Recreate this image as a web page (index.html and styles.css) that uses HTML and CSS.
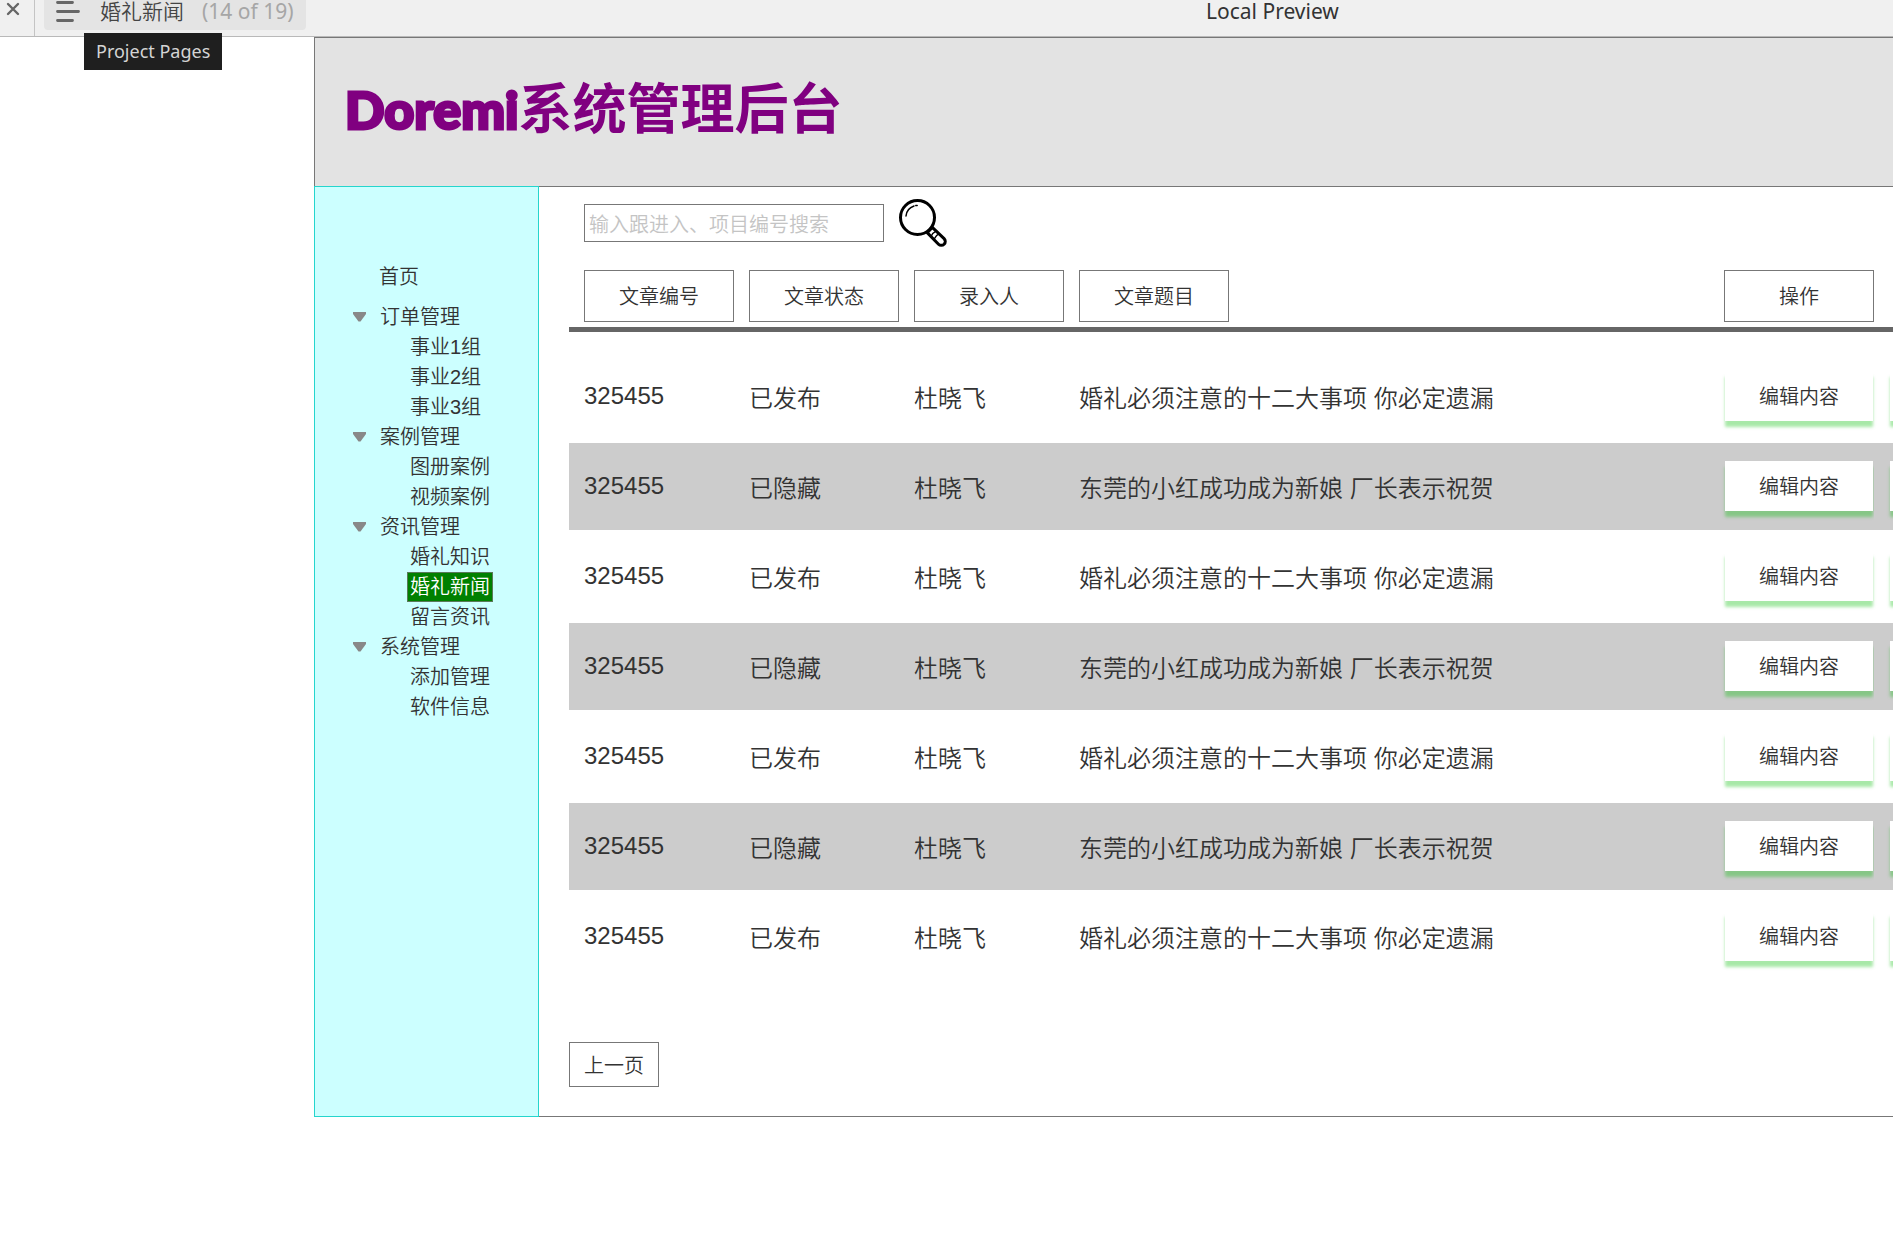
FILE: index.html
```html
<!DOCTYPE html>
<html lang="zh-CN">
<head>
<meta charset="utf-8">
<title>婚礼新闻</title>
<link rel="stylesheet" href="styles.css">
</head>
<body>
<div class="topbar">
  <button class="close" type="button" aria-label="Close">
    <svg width="14" height="14" viewBox="0 0 14 14"><path d="M2 2l10 10M12 2L2 12" stroke="#666" stroke-width="2.4" stroke-linecap="round"/></svg>
  </button>
  <div class="pages-wrap">
    <button class="pages" type="button" aria-describedby="pages-tip">
      <svg width="24" height="24" viewBox="0 0 24 24"><path d="M1.500 3.500h15M1.500 12.500h21M1.500 21.500h15" stroke="#666" stroke-width="2.800" stroke-linecap="round"/></svg>
      <span class="page-name">婚礼新闻</span>
      <span class="page-count">(14 of 19)</span>
    </button>
    <div class="tooltip" id="pages-tip" role="tooltip">Project Pages</div>
  </div>
  <div class="preview-title">Local Preview</div>
</div>

<div class="canvas">
  <header class="banner">
    <h1><span class="brand">Doremi</span>系统管理后台</h1>
  </header>
  <div class="body">
    <nav class="sidebar">
      <a class="home" href="#">首页</a>
      <ul class="tree">
        <li>
          <button class="group" type="button" aria-expanded="true"><svg width="13" height="10" viewBox="0 0 13 10"><path d="M0 0h13v2L7.500 9.500h-2L0 2z" fill="#888"/></svg>订单管理</button>
          <ul>
            <li><a href="#">事业1组</a></li>
            <li><a href="#">事业2组</a></li>
            <li><a href="#">事业3组</a></li>
          </ul>
        </li>
        <li>
          <button class="group" type="button" aria-expanded="true"><svg width="13" height="10" viewBox="0 0 13 10"><path d="M0 0h13v2L7.500 9.500h-2L0 2z" fill="#888"/></svg>案例管理</button>
          <ul>
            <li><a href="#">图册案例</a></li>
            <li><a href="#">视频案例</a></li>
          </ul>
        </li>
        <li>
          <button class="group" type="button" aria-expanded="true"><svg width="13" height="10" viewBox="0 0 13 10"><path d="M0 0h13v2L7.500 9.500h-2L0 2z" fill="#888"/></svg>资讯管理</button>
          <ul>
            <li><a href="#">婚礼知识</a></li>
            <li><a class="active" href="#" aria-current="page">婚礼新闻</a></li>
            <li><a href="#">留言资讯</a></li>
          </ul>
        </li>
        <li>
          <button class="group" type="button" aria-expanded="true"><svg width="13" height="10" viewBox="0 0 13 10"><path d="M0 0h13v2L7.500 9.500h-2L0 2z" fill="#888"/></svg>系统管理</button>
          <ul>
            <li><a href="#">添加管理</a></li>
            <li><a href="#">软件信息</a></li>
          </ul>
        </li>
      </ul>
    </nav>
    <main class="content">
      <form class="search">
        <input type="text" aria-label="搜索" placeholder="输入跟进入、项目编号搜索">
        <button type="button" aria-label="搜索">
          <svg width="48" height="48" viewBox="0 0 48 48" fill="none" stroke="#000">
            <circle cx="18.500" cy="18.500" r="17" stroke-width="3"/>
            <path d="M7 17c.5-5 3.500-8.500 8-10M16.800 6.600l1.400-.2" stroke-width="1.500" stroke-linecap="round"/>
            <path d="M28.200 33.600l11.300 11.600a3.700 3.700 0 0 0 5.600-5.600L33.300 28.400z" stroke-width="3" stroke-linejoin="round"/>
            <path d="M32 37.500c1.500-3 3-4.500 5.500-5.600M35 40.200c1.200-2.700 2.700-4.400 5.200-5.600" stroke-width="1.500"/>
          </svg>
        </button>
      </form>
      <table class="articles">
        <colgroup><col class="c-short"><col class="c-short"><col class="c-short"><col><col class="c-short"><col class="c-more"></colgroup>
        <thead>
          <tr>
            <th scope="col"><span>文章编号</span></th>
            <th scope="col"><span>文章状态</span></th>
            <th scope="col"><span>录入人</span></th>
            <th scope="col"><span>文章题目</span></th>
            <th scope="col"><span>操作</span></th>
            <td></td>
          </tr>
        </thead>
        <tbody>
          <tr><td>325455</td><td class="zh">已发布</td><td class="zh">杜晓飞</td><td class="zh">婚礼必须注意的十二大事项 你必定遗漏</td><td><button type="button">编辑内容</button></td><td><button type="button" aria-label="更多操作"></button></td></tr>
          <tr><td>325455</td><td class="zh">已隐藏</td><td class="zh">杜晓飞</td><td class="zh">东莞的小红成功成为新娘 厂长表示祝贺</td><td><button type="button">编辑内容</button></td><td><button type="button" aria-label="更多操作"></button></td></tr>
          <tr><td>325455</td><td class="zh">已发布</td><td class="zh">杜晓飞</td><td class="zh">婚礼必须注意的十二大事项 你必定遗漏</td><td><button type="button">编辑内容</button></td><td><button type="button" aria-label="更多操作"></button></td></tr>
          <tr><td>325455</td><td class="zh">已隐藏</td><td class="zh">杜晓飞</td><td class="zh">东莞的小红成功成为新娘 厂长表示祝贺</td><td><button type="button">编辑内容</button></td><td><button type="button" aria-label="更多操作"></button></td></tr>
          <tr><td>325455</td><td class="zh">已发布</td><td class="zh">杜晓飞</td><td class="zh">婚礼必须注意的十二大事项 你必定遗漏</td><td><button type="button">编辑内容</button></td><td><button type="button" aria-label="更多操作"></button></td></tr>
          <tr><td>325455</td><td class="zh">已隐藏</td><td class="zh">杜晓飞</td><td class="zh">东莞的小红成功成为新娘 厂长表示祝贺</td><td><button type="button">编辑内容</button></td><td><button type="button" aria-label="更多操作"></button></td></tr>
          <tr><td>325455</td><td class="zh">已发布</td><td class="zh">杜晓飞</td><td class="zh">婚礼必须注意的十二大事项 你必定遗漏</td><td><button type="button">编辑内容</button></td><td><button type="button" aria-label="更多操作"></button></td></tr>
        </tbody>
      </table>
      <button class="prev" type="button">上一页</button>
    </main>
  </div>
</div>
</body>
</html>
```
FILE: styles.css
```css
* {
  box-sizing: border-box;
}

body {
  margin: 0;
  background: #fff;
  color: #333;
  font: 350 20px/30px "Liberation Sans", "Noto Sans CJK SC", sans-serif;
}

button {
  margin: 0;
  padding: 0;
  border: 0;
  background: none;
  color: inherit;
  font: inherit;
}

svg {
  display: block;
  flex: none;
}

a {
  color: inherit;
  text-decoration: none;
}

ul {
  margin: 0;
  padding: 0;
  list-style: none;
}

/* preview toolbar */
.topbar {
  position: relative;
  display: flex;
  height: 37px;
  background: #f0f0f0;
  border-bottom: 1px solid #b9b9b9;
  font-family: "Noto Sans", "Noto Sans CJK SC", sans-serif;
  font-weight: 400;
}

.close {
  width: 35px;
  padding: 2px 0 20px 6px;
  border-right: 1px solid #c4c4c4;
}

.pages-wrap {
  position: relative;
  margin-left: 9px;
}

.pages {
  display: flex;
  align-items: center;
  width: 262px;
  height: 30px;
  padding: 0 0 8px 12px;
  border-radius: 0 0 4px 4px;
  background: #e4e4e4;
  font-size: 21px;
  line-height: 22px;
}

.pages svg {
  margin-right: 20px;
}

.page-name {
  margin-right: 18px;
  color: #444;
  font-weight: 350;
}

.page-count {
  color: #a6a6a6;
}

.tooltip {
  position: absolute;
  left: 40px;
  top: 33px;
  z-index: 1;
  padding: 0 12px;
  background: #1f1f1f;
  color: #d4d4d4;
  font-size: 18px;
  line-height: 37px;
  white-space: nowrap;
}

.preview-title {
  flex: 1;
  padding-left: 900px;
  font-size: 21px;
  line-height: 22px;
  white-space: nowrap;
}

/* page */
.canvas {
  margin-left: 314px;
}

.banner {
  padding: 28px 30px 41px;
  background: #e3e3e3;
  border: 1px solid #777;
  border-right: 0;
}

h1 {
  margin: 0;
  color: #800080;
  font: 700 54px/79px "Noto Sans CJK SC", sans-serif;
}

.brand {
  font: 900 52px/52px "Lato Black", Lato, sans-serif;
  -webkit-text-stroke: 3px #800080;
}

.body {
  display: flex;
  border-bottom: 1px solid #777;
}

.sidebar {
  flex: none;
  width: 225px;
  margin: -1px 0;
  padding: 75px 0 0 38px;
  background: #cff;
  border: 1px solid #25d5cd;
}

.home {
  display: block;
  margin-bottom: 10px;
  padding-left: 26px;
}

.group {
  display: flex;
  align-items: center;
  gap: 14px;
}

.tree ul {
  padding-left: 54px;
}

.tree li li {
  display: flex;
}

.tree a {
  padding: 0 2px;
  border: 1px solid transparent;
  line-height: 28px;
}

.tree .active {
  background: #008000;
  border-color: #5a7a5a;
  color: #fff;
}

.content {
  flex: 1;
  min-width: 0;
  overflow: hidden;
  padding: 12px 0 29px 30px;
}

.search {
  display: flex;
  align-items: center;
  gap: 15px;
  margin-bottom: 23px;
  padding-left: 15px;
}

.search input {
  width: 300px;
  height: 38px;
  margin: 0;
  padding: 4px 4px 0;
  border: 1px solid #777;
  background: #fff;
  color: #333;
  font: inherit;
}

.search input::placeholder {
  color: #c4c4c4;
}

/* article table */
.articles {
  width: 100%;
  border-collapse: separate;
  border-spacing: 0;
  table-layout: fixed;
}

.c-short {
  width: 165px;
}

.c-more {
  width: 19px;
}

.articles th,
.articles td {
  padding: 0 0 0 15px;
  text-align: left;
  white-space: nowrap;
}

.articles thead th,
.articles thead td {
  padding-bottom: 5px;
  border-bottom: 5px solid #666;
  font-weight: inherit;
}

.articles th span {
  display: block;
  width: 150px;
  padding-top: 2px;
  border: 1px solid #777;
  line-height: 48px;
  text-align: center;
}

.articles tbody::before {
  content: "";
  display: block;
  height: 21px;
}

.articles tbody td {
  height: 90px;
  padding-bottom: 2px;
  border-bottom: 3px solid #fff;
  font-size: 24px;
}

.articles tbody .zh {
  padding-top: 4px;
  padding-bottom: 0;
}

.articles tbody tr:nth-child(even) td {
  background: #ccc;
}

.articles tbody button {
  display: block;
  width: 148px;
  height: 50px;
  margin-left: 1px;
  padding-top: 2px;
  background: #fff;
  box-shadow: 0 6px 3px rgba(0, 187, 0, 0.34);
  font-size: 20px;
}

.prev {
  display: block;
  width: 90px;
  height: 45px;
  margin-top: 59px;
  padding-top: 3px;
  border: 1px solid #777;
}
```
